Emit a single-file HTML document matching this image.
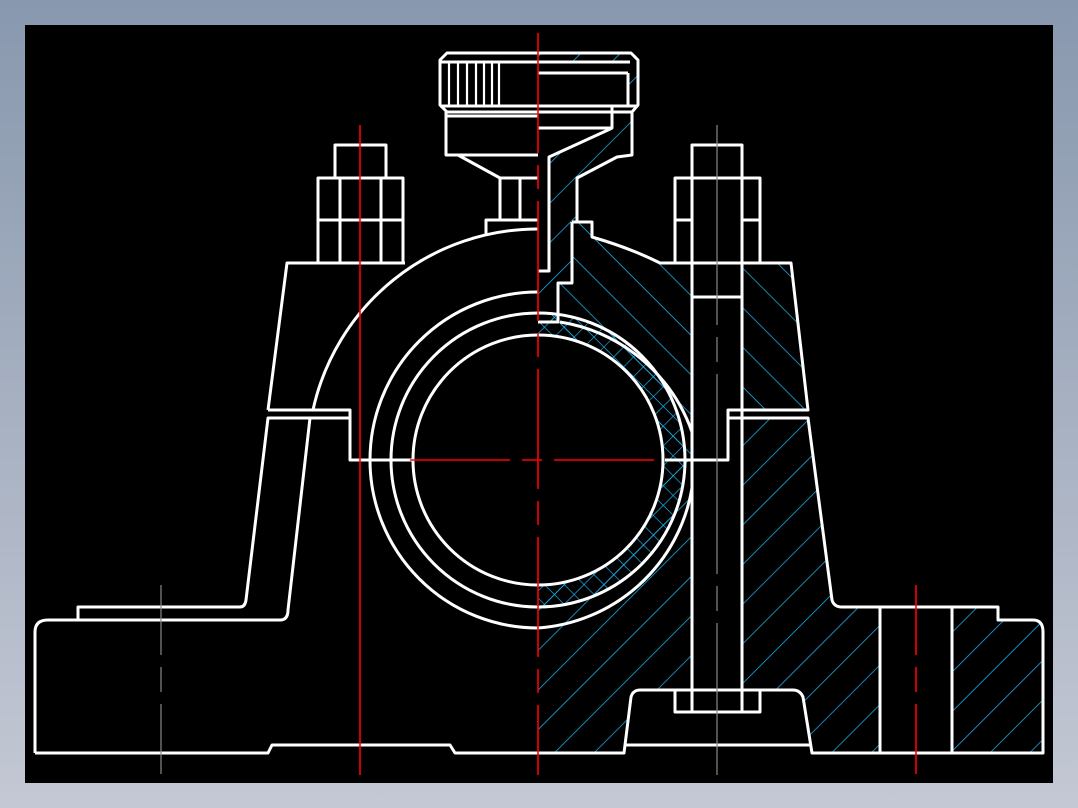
<!DOCTYPE html>
<html><head><meta charset="utf-8"><style>
html,body{margin:0;padding:0;width:1078px;height:808px;overflow:hidden;background:linear-gradient(#8898ae,#c4c8d4);}
svg{position:absolute;left:0;top:0}
</style></head><body>
<svg width="1078" height="808" viewBox="0 0 1078 808" xmlns="http://www.w3.org/2000/svg">
<defs>
<pattern id="hf" patternUnits="userSpaceOnUse" width="28" height="28" patternTransform="rotate(45)">
<line x1="0" y1="0" x2="28" y2="0" stroke="#1eb4f0" stroke-width="1.4"/></pattern>
<pattern id="hb" patternUnits="userSpaceOnUse" width="28" height="28" patternTransform="rotate(-45)">
<line x1="0" y1="0" x2="28" y2="0" stroke="#1eb4f0" stroke-width="1.4"/></pattern>
<pattern id="hk" patternUnits="userSpaceOnUse" width="14" height="14" patternTransform="rotate(-45)">
<line x1="0" y1="0" x2="14" y2="0" stroke="#1eb4f0" stroke-width="1.3"/></pattern>
<pattern id="hx" patternUnits="userSpaceOnUse" width="14" height="14" patternTransform="rotate(45)">
<line x1="0" y1="0" x2="14" y2="0" stroke="#1eb4f0" stroke-width="1.3"/></pattern>
</defs>
<rect x="25" y="25" width="1028" height="758" fill="#000"/>

<path d="M538,460 L728,460 L728,418 L808,418 L832,600 Q834,607 842,607 L998,607 L998,620 L1033,620 Q1043,620 1043,632 L1043,753 L810,753 L803,697 Q800,690 793,690 L640,690 Q633,690 631,697 L624,753 L538,753 Z" fill="url(#hb)"/>
<path d="M572,222 L592,222 L592,237 Q630,248 660,263 L791,263 L808,410 L728,410 L728,460 L538,460 L538,322 L558,322 L558,283 L572,283 Z" fill="url(#hf)"/>
<path d="M538,53 L631,53 L638,60 L638,105 L632,112 L632,155 L617,157 L577,178 L577,222 L572,222 L572,283 L558,283 L558,322 L538,322 Z" fill="url(#hb)"/>
<rect x="538" y="62" width="90" height="43" fill="#000"/>
<rect x="538" y="105" width="74" height="23" fill="#000"/>
<path d="M538,128 L608,128 L608,130 L550,157 L549,271 L538,271 Z" fill="#000"/>
<path d="M538,313 A147,147 0 0 1 538,607 L538,585 A125,125 0 0 0 538,335 Z" fill="url(#hk)"/>
<path d="M538,313 A147,147 0 0 1 538,607 L538,585 A125,125 0 0 0 538,335 Z" fill="url(#hx)"/>
<circle cx="538" cy="460" r="125" fill="#000"/>
<rect x="692" y="145" width="50" height="545" fill="#000"/>
<rect x="880" y="607" width="72" height="146" fill="#000"/>

<g fill="none" stroke="#fff" stroke-width="3" stroke-linejoin="round">
<path d="M35,753 L35,632 Q35,620 48,620 L280,620 Q288,620 288,610 L310,418"/>
<path d="M78,620 L78,607 L240,607 Q245,607 246,600 L268,418 L350,418"/>
<path d="M35,753 L268,753 L272,745 L450,745 L455,753 L538,753"/>
<path d="M268,410 L287,263 L405,263"/>
<path d="M268,410 L350,410 L350,460 L413,460"/>
<path d="M313,410 A230,230 0 0 1 538,229"/>
<circle cx="538" cy="460" r="125"/>
<circle cx="538" cy="460" r="147"/>
<path d="M538,292 A168,168 0 1 0 538,628"/>
<path d="M560,322 A168,168 0 0 1 692,432"/>
<path d="M692,488 A168,168 0 0 1 538,628"/>
<rect x="335" y="145" width="51" height="33"/>
<rect x="318" y="178" width="85" height="85"/>
<line x1="340" y1="178" x2="340" y2="263"/><line x1="381" y1="178" x2="381" y2="263"/>
<line x1="318" y1="220" x2="403" y2="220"/>
<rect x="692" y="145" width="50" height="33"/>
<path d="M692,263 L675,263 L675,178 L760,178 L760,263 L742,263"/>
<line x1="675" y1="220" x2="692" y2="220"/><line x1="742" y1="220" x2="760" y2="220"/>
<line x1="692" y1="178" x2="692" y2="712"/><line x1="742" y1="178" x2="742" y2="712"/>
<line x1="692" y1="297" x2="742" y2="297"/>
<rect x="675" y="690" width="85" height="22"/>
<path d="M572,222 L592,222 L592,237 Q630,248 660,263 L791,263 L808,410 L728,410 L728,460 L665,460"/>
<path d="M728,418 L808,418 L832,600 Q834,607 842,607 L998,607 L998,620 L1033,620 Q1043,620 1043,632 L1043,753 L812,753 L803,697 Q800,690 793,690 L640,690 Q633,690 631,697 L624,753 L538,753"/>
<path d="M626,745 L810,745"/>
<line x1="880" y1="607" x2="880" y2="753"/><line x1="952" y1="607" x2="952" y2="753"/>
<path d="M538,271 L549,271 L549,157 L608,130 L612,128 L612,105"/>
<path d="M572,222 L572,283 L558,283 L558,322 L538,322"/>
<path d="M577,222 L577,178 L617,157 L632,155 L632,112"/>
<path d="M447,53 L631,53 L638,60 L638,105 L632,112 L447,112 L440,105 L440,60 Z"/>
<line x1="440" y1="62" x2="630" y2="62"/>
<line x1="538" y1="73" x2="628" y2="73"/><line x1="628" y1="73" x2="628" y2="105"/>
<line x1="440" y1="106" x2="638" y2="106"/>
<line x1="538" y1="128" x2="612" y2="128"/>
<path d="M446,112 L446,155 L538,155"/>
<line x1="446" y1="116" x2="538" y2="116"/>
<path d="M458,155 L500,178 L538,178"/>
<line x1="500" y1="178" x2="500" y2="220"/><line x1="520" y1="178" x2="520" y2="220"/>
<path d="M486,235 L486,220 L538,220"/>
</g>
<g stroke="#fff" stroke-width="2.2">
<line x1="449" y1="62" x2="449" y2="106"/><line x1="458" y1="62" x2="458" y2="106"/>
<line x1="467" y1="62" x2="467" y2="106"/><line x1="476" y1="62" x2="476" y2="106"/>
<line x1="484" y1="62" x2="484" y2="106"/><line x1="492" y1="62" x2="492" y2="106"/>
<line x1="499" y1="62" x2="499" y2="106"/>
</g>
<g stroke="#ff0000" stroke-width="1.6">
<line x1="538" y1="33" x2="538" y2="775" stroke-dasharray="120,12,24,12"/>
<line x1="360" y1="125" x2="360" y2="775"/>
<line x1="916" y1="585" x2="916" y2="775" stroke-dasharray="70,12,25,12"/>
<line x1="410" y1="460" x2="665" y2="460" stroke-dasharray="100,12,20,12"/>
</g>
<g stroke="#888" stroke-width="1.2">
<line x1="161" y1="585" x2="161" y2="775" stroke-dasharray="70,12,25,12"/>
<line x1="717" y1="125" x2="717" y2="775" stroke-dasharray="200,12,25,12"/>
</g>
</svg>
</body></html>
